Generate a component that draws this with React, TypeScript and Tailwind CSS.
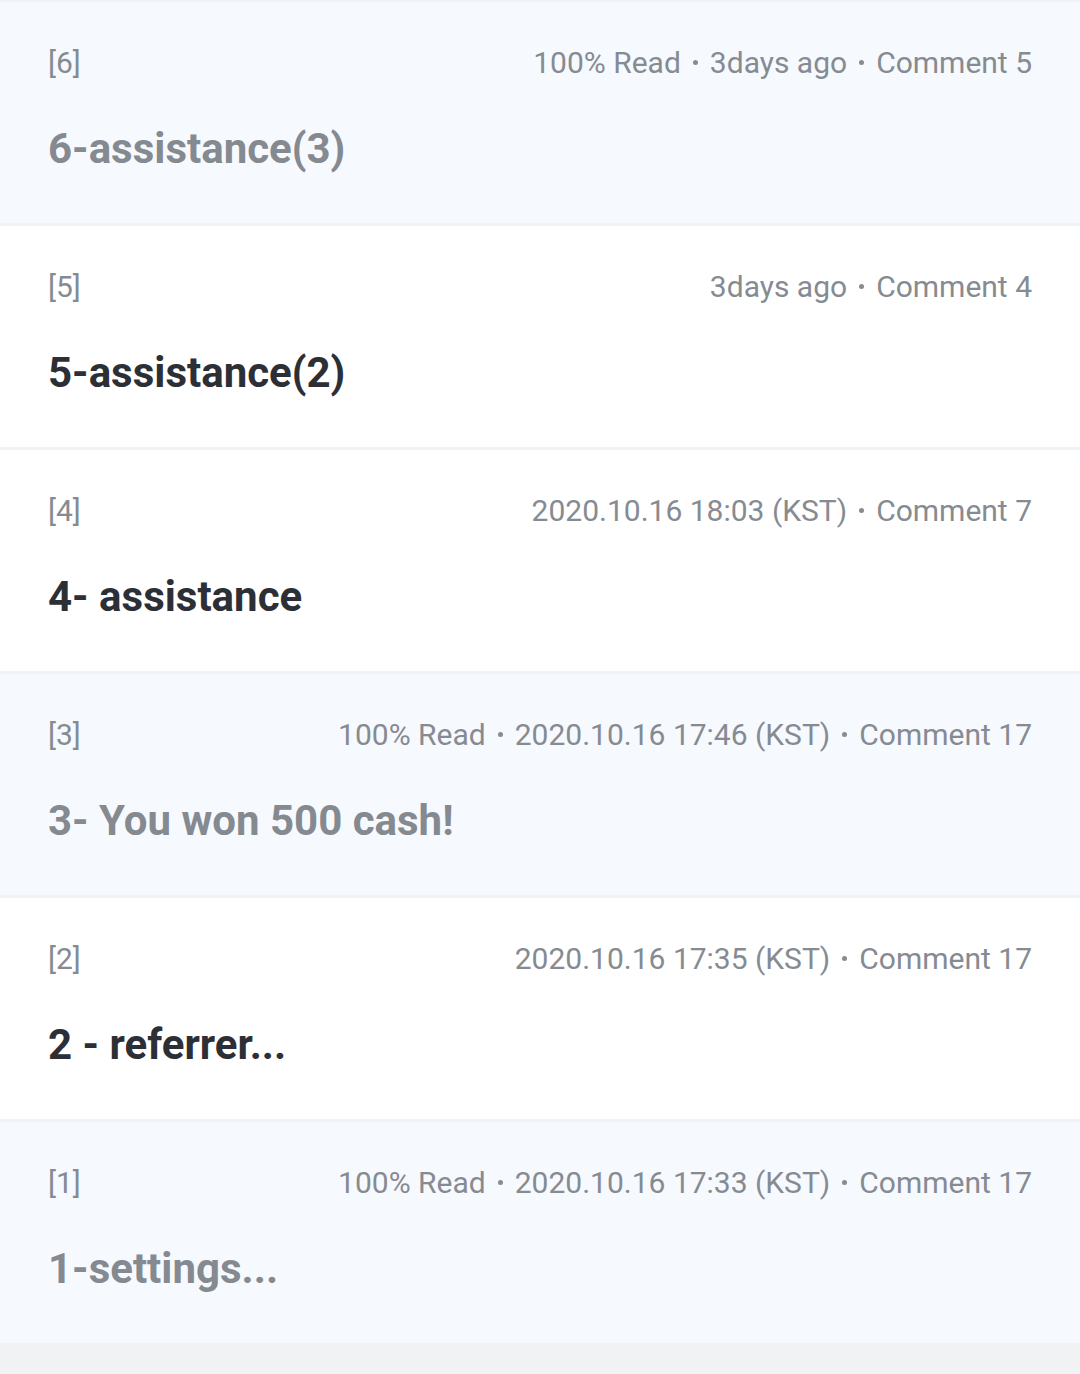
const posts = [
  { no: 6, meta: ["100% Read", "3days ago", "Comment 5"], title: "6-assistance(3)", read: true },
  { no: 5, meta: ["3days ago", "Comment 4"], title: "5-assistance(2)", read: false },
  { no: 4, meta: ["2020.10.16 18:03 (KST)", "Comment 7"], title: "4- assistance", read: false },
  { no: 3, meta: ["100% Read", "2020.10.16 17:46 (KST)", "Comment 17"], title: "3- You won 500 cash!", read: true },
  { no: 2, meta: ["2020.10.16 17:35 (KST)", "Comment 17"], title: "2 - referrer...", read: false },
  { no: 1, meta: ["100% Read", "2020.10.16 17:33 (KST)", "Comment 17"], title: "1-settings...", read: true },
];

export default function App() {
  return (
    <div className="min-h-[1374px] w-full bg-[#f1f2f3] pt-[2px] font-['Roboto',sans-serif]">
      <div className="flex flex-col gap-[3px]">
        {posts.map((post) => (
          <div
            key={post.no}
            className={
              post.read
                ? "h-[221px] bg-[#f6f9fe] px-[48px] pt-[39px]"
                : "h-[221px] bg-white px-[48px] pt-[39px]"
            }
          >
            <div className="flex h-[42px] items-center justify-between text-[30px] text-[#868b92]">
              <span>[{post.no}]</span>
              <div className="flex items-center">
                {post.meta.map((m, i) => (
                  <div key={i} className="flex items-center">
                    {i > 0 && <span className="mx-[12px] h-[5px] w-[5px] rounded-full bg-[#868b92]"></span>}
                    <span>{m}</span>
                  </div>
                ))}
              </div>
            </div>
            <div
              className={
                post.read
                  ? "mt-[36px] h-[60px] text-[42px] leading-[60px] font-bold text-[#858a90]"
                  : "mt-[36px] h-[60px] text-[42px] leading-[60px] font-bold text-[#2c3036]"
              }
            >
              {post.title}
            </div>
          </div>
        ))}
      </div>
    </div>
  );
}
